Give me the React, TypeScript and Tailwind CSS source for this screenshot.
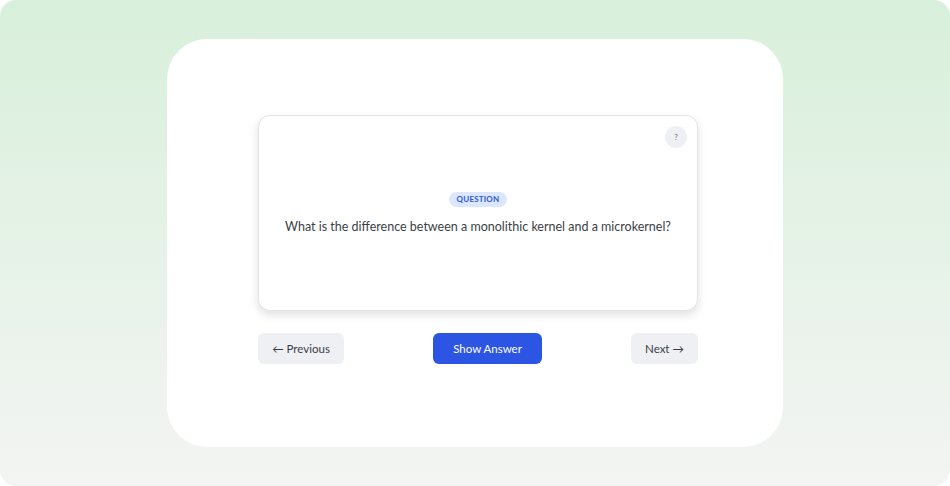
import React from "react";

export default function App() {
  return (
    <div className="w-[950px] h-[486px] bg-white" style={{ fontFamily: "Lato, 'Open Sans', sans-serif" }}>
      <div className="w-[950px] h-[486px] rounded-[16px] bg-gradient-to-b from-[#d8f0db] to-[#f3f4f3] flex justify-center pt-[39px]">
        <div className="w-[616px] h-[408px] rounded-[40px] bg-white flex flex-col items-center pt-[76px] pl-[6px]">
          <div className="relative w-[440px] h-[196px] rounded-[12px] border border-[#e3e4e8] bg-white shadow-[0_4px_10px_rgba(0,0,0,0.12)] flex flex-col items-center justify-center">
            <div className="absolute top-[10px] right-[10px] w-[22px] h-[22px] rounded-full bg-[#eff0f3] flex items-center justify-center text-[8px] text-[#6b6f7a]">?</div>
            <div className="mt-[2px] px-[8px] h-[15px] rounded-full bg-[#dbe7fd] flex items-center text-[8px] font-bold tracking-[0.2px] text-[#3056d8]">QUESTION</div>
            <div className="mt-[11px] text-[12.5px] text-[#3c3f48]">What is the difference between a monolithic kernel and a microkernel?</div>
          </div>
          <div className="w-[440px] mt-[22px] flex justify-between items-center">
            <button className="w-[86px] h-[31px] rounded-[6px] bg-[#eff0f4] text-[11.5px] text-[#3a3d46]">← Previous</button>
            <button className="w-[109px] h-[31px] rounded-[6px] bg-[#2c55e3] text-[11.5px] text-white">Show Answer</button>
            <button className="w-[67px] h-[31px] rounded-[6px] bg-[#eff0f4] text-[11.5px] text-[#3a3d46]">Next →</button>
          </div>
        </div>
      </div>
    </div>
  );
}
